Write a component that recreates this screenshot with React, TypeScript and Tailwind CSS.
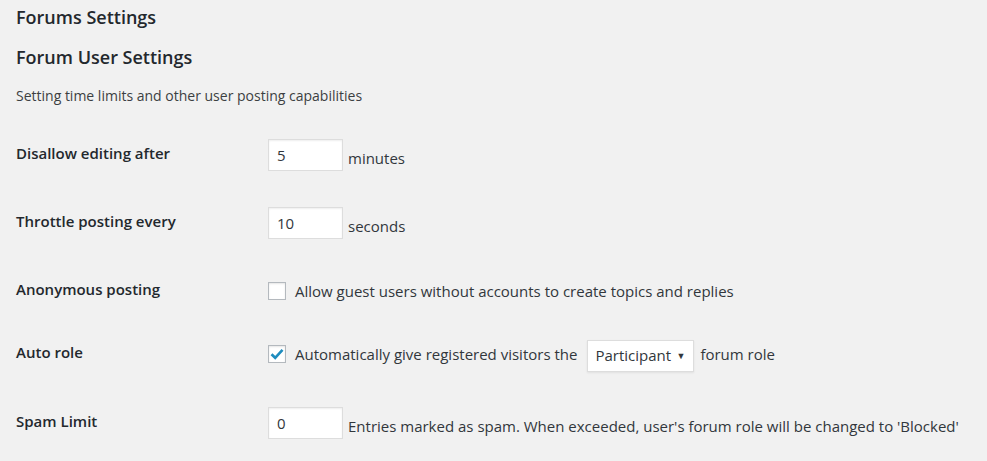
const FONT = "font-['Segoe_UI','Open_Sans',sans-serif]";

function NumberBox({ value }: { value: string }) {
  return (
    <input
      type="text"
      defaultValue={value}
      className="h-[32px] w-[75px] border border-[#dddddd] bg-white px-2 text-[15px] text-[#32373c] shadow-[inset_0_1px_2px_rgba(0,0,0,0.07)] outline-none"
    />
  );
}

function Check({ checked }: { checked?: boolean }) {
  return (
    <span className="flex h-[18px] w-[18px] items-center justify-center border border-[#b4b9be] bg-white shadow-[inset_0_1px_2px_rgba(0,0,0,0.1)]">
      {checked && (
        <svg width="16" height="16" viewBox="0 0 16 16">
          <path d="M2.5 8.2 L6.2 11.8 L13.5 3.8" fill="none" stroke="#1e8cbe" strokeWidth="2.6" />
        </svg>
      )}
    </span>
  );
}

function Row({ label, h, children }: { label: string; h: string; children: React.ReactNode }) {
  return (
    <div className={`grid grid-cols-[252px_1fr] items-center ${h}`}>
      <div className="mb-1 text-[15px] font-semibold text-[#23282d]">{label}</div>
      <div className="flex items-center text-[15px] text-[#32373c]">{children}</div>
    </div>
  );
}

export default function App() {
  return (
    <div className={`h-[461px] w-[987px] overflow-hidden bg-[#f1f1f1] px-4 ${FONT}`}>
      <h1 className="pt-[5px] text-[18px] font-semibold leading-[24px] text-[#23282d]">Forums Settings</h1>
      <h2 className="mt-4 text-[18px] font-semibold leading-[24px] text-[#23282d]">Forum User Settings</h2>
      <p className="mt-[19px] text-[14px] leading-[16px] text-[#3c3f42]">Setting time limits and other user posting capabilities</p>

      <div className="mt-[17px]">
        <Row label="Disallow editing after" h="h-[68px]">
          <NumberBox value="5" />
          <span className="ml-[5px] mt-[6px]">minutes</span>
        </Row>
        <Row label="Throttle posting every" h="h-[68px]">
          <NumberBox value="10" />
          <span className="ml-[5px] mt-[6px]">seconds</span>
        </Row>
        <Row label="Anonymous posting" h="h-[68px]">
          <Check />
          <span className="ml-[9px]">Allow guest users without accounts to create topics and replies</span>
        </Row>
        <Row label="Auto role" h="h-[58px]">
          <Check checked />
          <span className="ml-[9px]">Automatically give registered visitors the</span>
          <span className="ml-[10px] mt-[3px] flex h-[32px] w-[107px] items-center justify-between border border-[#dddddd] bg-white pl-[7px] pr-[8px] shadow-[0_1px_2px_rgba(0,0,0,0.07)]">
            <span>Participant</span>
            <span className="text-[9px] text-[#32373c]">▼</span>
          </span>
          <span className="ml-[6px]">forum role</span>
        </Row>
        <Row label="Spam Limit" h="h-[80px]">
          <NumberBox value="0" />
          <span className="ml-[5px] mt-[6px]">Entries marked as spam. When exceeded, user's forum role will be changed to 'Blocked'</span>
        </Row>
      </div>
    </div>
  );
}
